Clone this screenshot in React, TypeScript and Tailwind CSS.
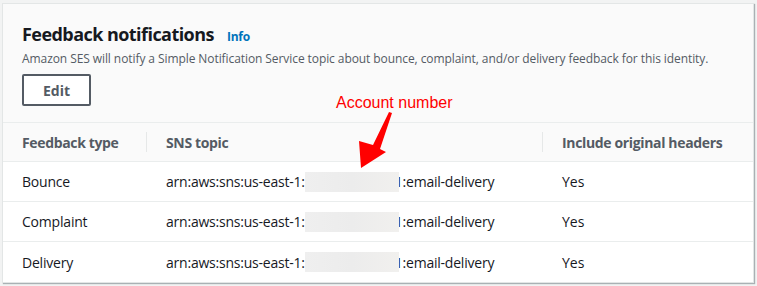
import React from 'react';

const rows = [
  { type: 'Bounce', headers: 'Yes' },
  { type: 'Complaint', headers: 'Yes' },
  { type: 'Delivery', headers: 'Yes' },
];

function Redacted() {
  return (
    <span className="relative z-10 inline-block w-[94px] h-[20px] align-middle -mr-[4px] bg-gradient-to-r from-[#efefef] via-[#ececec] to-[#f1f0ee]" />
  );
}

export default function App() {
  return (
    <div
      className="w-[757px] h-[286px] bg-[#f2f3f3] pt-[3px] pl-[2px] pr-[3px] overflow-hidden"
      style={{ fontFamily: '"Open Sans", "Noto Sans", sans-serif' }}
    >
      <div className="relative bg-white border border-[#e3e6e6] shadow-[1px_1px_1px_rgba(0,28,36,0.3)]">
        <div className="bg-[#fafafa] px-[19px] pt-[18px] pb-[16px]">
          <div className="flex items-baseline gap-[13px]">
            <h2 className="text-[18px] leading-[24px] font-bold text-[#16191f] tracking-[-0.55px]">Feedback notifications</h2>
            <a className="text-[12px] font-bold text-[#0073bb] tracking-[-0.2px]">Info</a>
          </div>
          <p className="mt-[4px] text-[12px] leading-[18px] text-[#545b64] tracking-[-0.08px]">
            Amazon SES will notify a Simple Notification Service topic about bounce, complaint, and/or delivery feedback for this identity.
          </p>
          <button className="mt-[6px] w-[69px] h-[32px] border-2 border-[#545b64] rounded-[2px] bg-white text-[14px] font-bold text-[#545b64]">
            Edit
          </button>
        </div>

        <div className="grid grid-cols-[143px_396px_1fr] text-[14px]">
          <div className="contents">
            {['Feedback type', 'SNS topic', 'Include original headers'].map((h, i) => (
              <div
                key={h}
                className="h-[40px] flex items-center border-t border-b border-[#eaeded] bg-[#fafafa]"
              >
                {i > 0 && <span className="w-px h-[20px] bg-[#e6e8e8]" />}
                <span className="pl-[19px] font-bold text-[#545b64] tracking-[-0.35px]">{h}</span>
              </div>
            ))}
          </div>
          {rows.map((r, idx) => (
            <div key={r.type} className="contents">
              <div className={`h-[40px] flex items-center pl-[19px] text-[#16191f] tracking-[-0.2px] ${idx < 2 ? 'border-b border-[#eaeded]' : ''}`}>
                {r.type}
              </div>
              <div className={`h-[40px] flex items-center pl-[20px] text-[#16191f] whitespace-nowrap tracking-[-0.22px] ${idx < 2 ? 'border-b border-[#eaeded]' : ''}`}>
                <span>arn:aws:sns:us-east-1:</span>
                <Redacted />
                <span>1:email-delivery</span>
              </div>
              <div className={`h-[40px] flex items-center pl-[20px] text-[#16191f] ${idx < 2 ? 'border-b border-[#eaeded]' : ''}`}>
                {r.headers}
              </div>
            </div>
          ))}
        </div>

        <span
          className="absolute left-[333px] top-[87px] text-[16px] text-[#ff0000]"
          style={{ fontFamily: '"Liberation Sans", Arial, sans-serif' }}
        >
          Account number
        </span>
        <svg className="absolute left-[350px] top-[105px]" width="45" height="65" viewBox="350 105 45 65">
          <polygon points="389,109 377,145 383,148 358,164 356,137 370,141 386,108" fill="#ff0000" />
        </svg>
      </div>
    </div>
  );
}
